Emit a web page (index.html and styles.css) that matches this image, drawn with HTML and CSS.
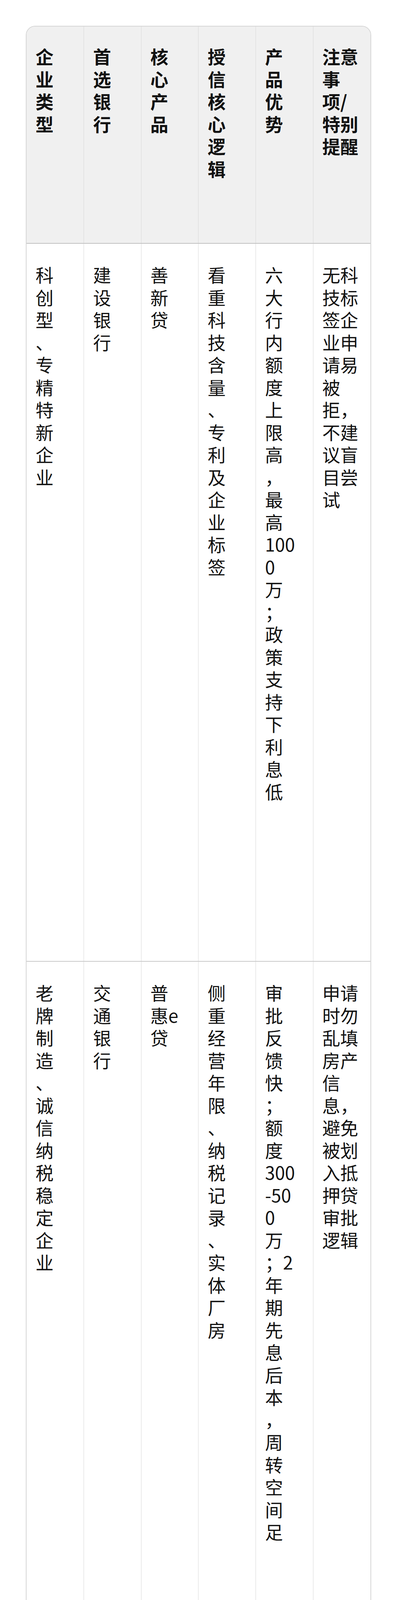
FILE: index.html
```html
<!DOCTYPE html>
<html lang="zh-CN">
<head>
<meta charset="utf-8">
<title>企业贷款银行选择</title>
<link rel="stylesheet" href="styles.css">
</head>
<body>
<div class="page">
  <div class="table-wrap">
    <table class="loan-table">
      <colgroup>
        <col><col><col><col><col><col>
      </colgroup>
      <thead>
        <tr class="row-head">
          <th>企业类型</th>
          <th>首选银行</th>
          <th>核心产品</th>
          <th>授信核心逻辑</th>
          <th>产品优势</th>
          <th class="notes">注意事项/特别提醒</th>
        </tr>
      </thead>
      <tbody>
        <tr class="row-1">
          <td>科创型、专精特新企业</td>
          <td>建设银行</td>
          <td>善新贷</td>
          <td>看重科技含量、专利及企业标签</td>
          <td>六大行内额度上限高，最高1000万；政策支持下利息低</td>
          <td class="notes">无科技标签企业申请易被拒，不建议盲目尝试</td>
        </tr>
        <tr class="row-2">
          <td>老牌制造、诚信纳税稳定企业</td>
          <td>交通银行</td>
          <td>普惠e贷</td>
          <td>侧重经营年限、纳税记录、实体厂房</td>
          <td>审批反馈快；额度300-500万；2年期先息后本，周转空间足</td>
          <td class="notes">申请时勿乱填房产信息，避免被划入抵押贷审批逻辑</td>
        </tr>
        <tr class="row-3">
          <td>贸易型、开票大户企业</td>
          <td>徽商银行/浦发银行</td>
          <td>税融通/银税贷</td>
          <td>重点参考开票数据、企业流水</td>
          <td>门槛灵活，纳税少但开票金额达标也可获批</td>
          <td class="notes"><div class="note-item note-first">1. 浦发银行要求开票金额400万以上</div><div class="note-item">2. 徽商银行税融通在长三角（含芜湖）成熟度高，当地企业优先选</div></td>
        </tr>
      </tbody>
    </table>
  </div>
</div>
</body>
</html>
```
FILE: styles.css
```css
html, body {
  margin: 0;
  padding: 0;
  background: #ffffff;
}

body {
  font-family: "Noto Sans CJK SC", "Noto Sans", sans-serif;
  color: #111111;
}

.page {
  padding: 66px 66px 60px;
}

.table-wrap {
  border: 2px solid #d6d6d6;
  border-radius: 24px;
  overflow: hidden;
}

.loan-table {
  width: 100%;
  border-collapse: collapse;
  table-layout: fixed;
  font-size: 46px;
  line-height: 1.25;
}

.loan-table th,
.loan-table td {
  vertical-align: top;
  text-align: left;
  padding: 50px 37px 0 23px;
  overflow-wrap: break-word;
  border-left: 1px solid #d8d8d8;
}

.loan-table th:first-child,
.loan-table td:first-child {
  border-left: none;
}

.loan-table th {
  font-weight: 700;
  background: #f0f0f0;
  padding-top: 47px;
}

.loan-table .notes {
  padding-right: 31px;
}

.note-first {
  margin-right: -8px;
}

.row-head {
  height: 555px;
  border-bottom: 2px solid #c2c2c2;
}

.row-1 {
  height: 1838px;
  border-bottom: 2px solid #cacaca;
}

.row-2 {
  height: 1909px;
  border-bottom: 2px solid #cacaca;
}

.row-3 {
  height: 1980px;
}
```
